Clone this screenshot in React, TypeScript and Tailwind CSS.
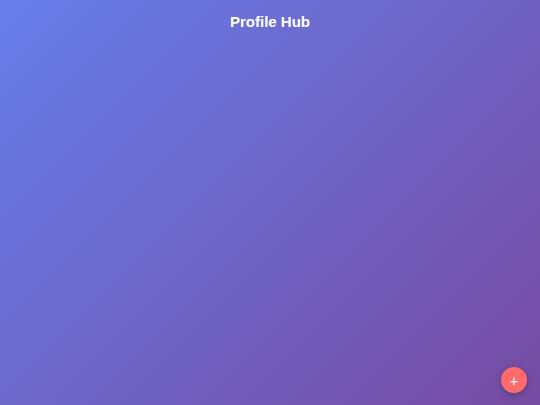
export default function App() {
  return (
    <div className="relative min-h-screen w-full bg-[linear-gradient(135deg,#667eea_0%,#764ba2_100%)] font-['Liberation_Sans',Arial,sans-serif]">
      <header className="pt-[13px] text-center">
        <h1 className="text-[15px] font-bold leading-[17px] text-white">Profile Hub</h1>
      </header>
      <button className="fixed bottom-[12px] right-[13px] flex h-[26px] w-[26px] items-center justify-center rounded-full bg-[#ff6b6b] text-[15px] leading-none text-white shadow-[0_2px_6px_rgba(0,0,0,0.25)]">
        +
      </button>
    </div>
  );
}
